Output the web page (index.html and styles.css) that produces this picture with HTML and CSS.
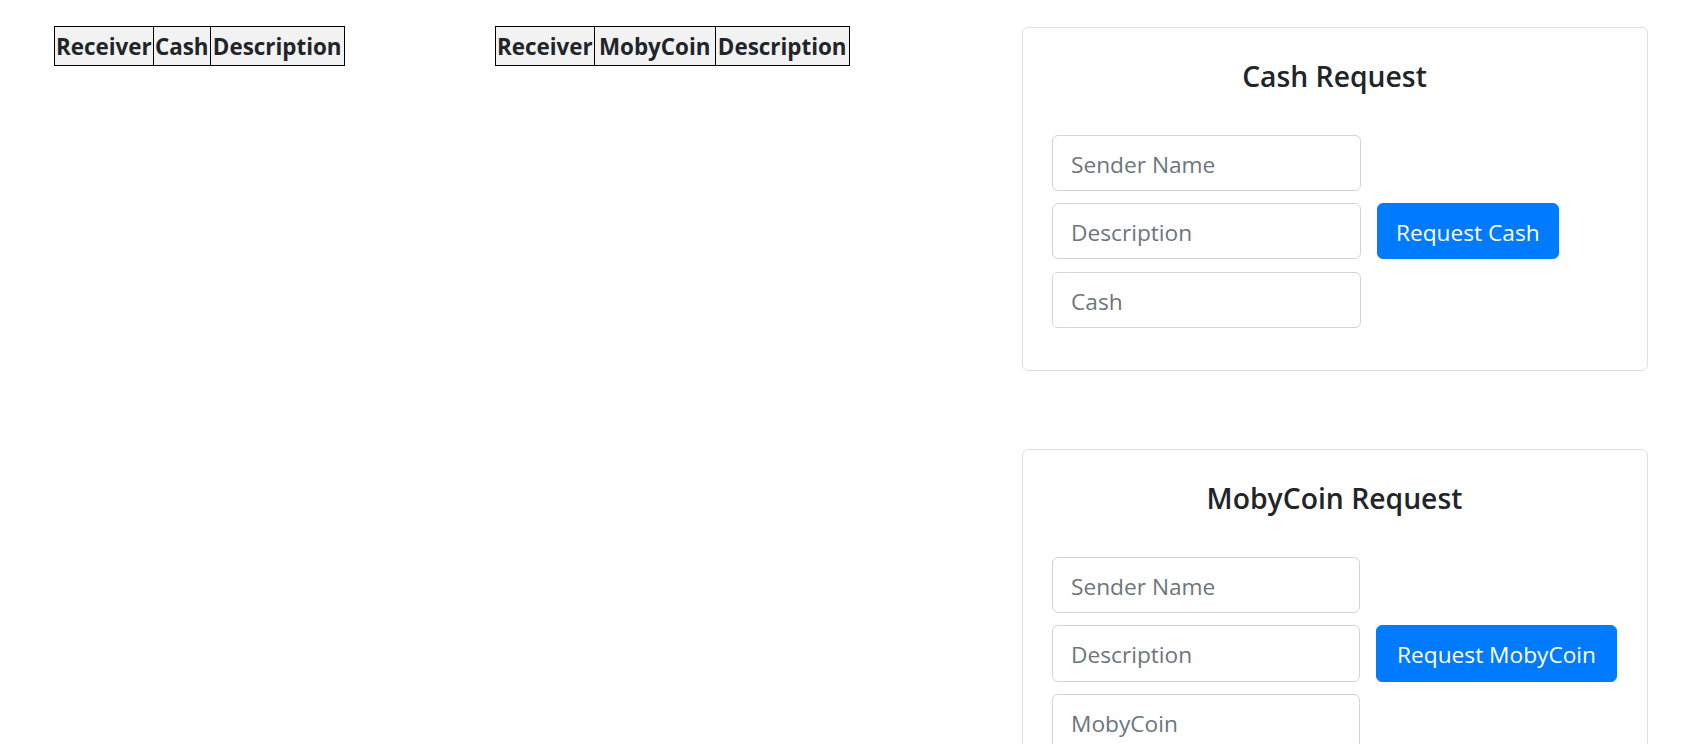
FILE: index.html
```html
<!DOCTYPE html>
<html lang="en">
<head>
<meta charset="utf-8">
<title>Requests</title>
<link rel="stylesheet" href="styles.css">
</head>
<body>
<div class="page">
  <div class="col">
    <table class="ledger">
      <thead>
        <tr><th class="w-recv">Receiver</th><th class="w-cash">Cash</th><th class="w-desc">Description</th></tr>
      </thead>
      <tbody></tbody>
    </table>
  </div>
  <div class="col">
    <table class="ledger">
      <thead>
        <tr><th class="w-recv">Receiver</th><th class="w-coin">MobyCoin</th><th class="w-desc">Description</th></tr>
      </thead>
      <tbody></tbody>
    </table>
  </div>
  <div class="side">
    <div class="card">
      <h5 class="card-title">Cash Request</h5>
      <form class="req-form">
        <div class="fields">
          <input class="field" type="text" placeholder="Sender Name">
          <input class="field" type="text" placeholder="Description">
          <input class="field" type="text" placeholder="Cash">
        </div>
        <button class="btn" type="button">Request Cash</button>
      </form>
    </div>
    <div class="card">
      <h5 class="card-title">MobyCoin Request</h5>
      <form class="req-form">
        <div class="fields">
          <input class="field" type="text" placeholder="Sender Name">
          <input class="field" type="text" placeholder="Description">
          <input class="field" type="text" placeholder="MobyCoin">
        </div>
        <button class="btn btn-wide" type="button">Request MobyCoin</button>
      </form>
    </div>
  </div>
</div>
</body>
</html>
```
FILE: styles.css
```css
* { box-sizing: border-box; }
html, body { margin: 0; padding: 0; background: #fff; }
body {
  font-family: "Open Sans", "Noto Sans", "Liberation Sans", sans-serif;
  color: #212529;
  font-size: 22.7px;
  line-height: 1.5;
}
.page {
  display: grid;
  grid-template-columns: 441px 527px 626px;
  padding: 26px 0 0 54px;
  align-items: start;
}
.ledger {
  border-collapse: collapse;
}
.ledger th {
  border: 1px solid #000;
  background: #f2f2f2;
  font-weight: 700;
  font-size: 22.4px;
  line-height: 36px;
  padding: 2px 1px 0 1px;
  text-align: center;
  white-space: nowrap;
}
.ledger .w-recv { width: 97px; }
.ledger .w-cash { width: 57px; }
.ledger .w-coin { width: 121px; }
.ledger .w-desc { width: 134px; }
.side {
  margin-top: 1px;
  display: flex;
  flex-direction: column;
  gap: 78px;
}
.card {
  border: 1.2px solid rgba(0,0,0,.125);
  border-radius: 6px;
  padding: 30px 30px 42px 29px;
}
.card-title {
  margin: 0 0 40.5px;
  text-align: center;
  font-size: 28.3px;
  font-weight: 600;
  line-height: 36px;
}
.req-form {
  display: flex;
  align-items: center;
  gap: 16px;
  margin: 0;
}
.fields {
  display: flex;
  flex-direction: column;
  gap: 12.2px;
  width: 309px;
}
.field {
  height: 56.4px;
  width: 100%;
  border: 1.2px solid #ced4da;
  border-radius: 6px;
  padding: 3px 18px 0;
  font: inherit;
  font-size: 22.7px;
  color: #495057;
  background: #fff;
}
.field::placeholder { color: #6c757d; opacity: 1; }
.btn {
  height: 56.4px;
  border: 1.2px solid #007bff;
  background: #007bff;
  color: #fff;
  border-radius: 6px;
  padding: 3px 18px 0;
  font: inherit;
  font-size: 22.7px;
  white-space: nowrap;
}
.btn-wide { padding: 3px 20px 0; }
```
